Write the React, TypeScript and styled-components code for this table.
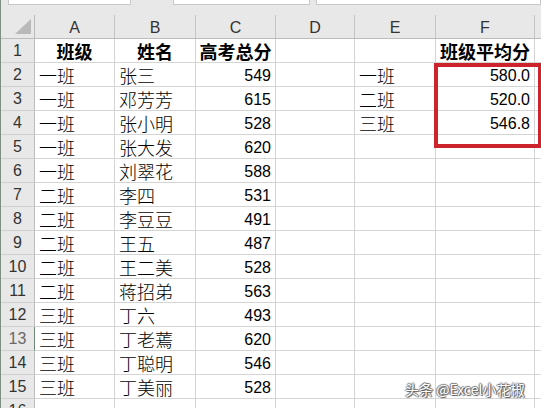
import React from "react";
import styled, { createGlobalStyle } from "styled-components";

const Global = createGlobalStyle`
  html, body { margin: 0; padding: 0; background: #ffffff; }
  body { width: 541px; height: 408px; overflow: hidden; }
  * { box-sizing: border-box; }
`;

const Page = styled.div`
  position: relative;
  width: 541px;
  height: 408px;
  overflow: hidden;
  background: #e8e8e8;
  border-left: 1px solid #7f8f83;
  font-family: "Liberation Sans", Arial, sans-serif;
`;

const FormulaStrip = styled.div`
  display: flex;
  height: 5px;
  padding-left: 7px;
  background: #e8e8e8;
`;

const FormulaBox = styled.div<{ $w: number; $gap: number }>`
  width: ${(p) => p.$w}px;
  margin-right: ${(p) => p.$gap}px;
  flex: ${(p) => (p.$w === 0 ? 1 : "none")};
  background: #ffffff;
  border: 1px solid #c8c8c8;
  border-top: none;
`;

const Gap = styled.div`
  height: 10px;
`;

const Grid = styled.div`
  display: grid;
  grid-template-columns: 34px 80px 81px 80px 79px 81px 99px 1fr;
  grid-auto-rows: 24px;
  background: #ffffff;
`;

const Corner = styled.div`
  background: #e8e8e8;
  border-right: 1px solid #bcbcbc;
  border-bottom: 1px solid #bcbcbc;
  display: flex;
  align-items: flex-end;
  justify-content: flex-end;
  padding: 0 3px 4px 0;
`;

const ColHead = styled.div`
  background: #e8e8e8;
  border-right: 1px solid #c4c4c4;
  border-bottom: 1px solid #bcbcbc;
  display: flex;
  align-items: center;
  justify-content: center;
  font-size: 16px;
  color: #333;
  padding-top: 2px;
`;

const RowHead = styled.div<{ $active?: boolean }>`
  background: #e8e8e8;
  border-right: 1px solid ${(p) => (p.$active ? "#6f8a76" : "#bcbcbc")};
  border-bottom: 1px solid #d0d0d0;
  display: flex;
  align-items: center;
  justify-content: center;
  font-size: 16px;
  color: ${(p) => (p.$active ? "#6a6a6a" : "#333")};
  padding-top: 1px;
`;

const Cell = styled.div<{ $align: "left" | "right" | "center"; $bold?: boolean; $cjk?: boolean }>`
  border-right: 1px solid #d4d4d4;
  border-bottom: 1px solid #d4d4d4;
  display: flex;
  align-items: center;
  justify-content: ${(p) => (p.$align === "left" ? "flex-start" : p.$align === "right" ? "flex-end" : "center")};
  padding: 0 4px;
  font-family: ${(p) => (p.$cjk ? '"Noto Sans CJK SC", sans-serif' : '"Liberation Sans", Arial, sans-serif')};
  font-size: ${(p) => (p.$cjk ? "18px" : "16px")};
  font-weight: ${(p) => (p.$bold ? 700 : p.$cjk ? 300 : 400)};
  color: #000;
  white-space: nowrap;
  overflow: hidden;
  line-height: 1;
  padding-top: ${(p) => (p.$cjk ? 0 : 2)}px;
`;

const Highlight = styled.div`
  position: absolute;
  left: 433px;
  top: 63px;
  width: 108px;
  height: 85px;
  border: 4px solid #cc232c;
  pointer-events: none;
`;

const Watermark = styled.div`
  position: absolute;
  left: 404px;
  top: 381px;
  font-family: "Noto Sans CJK SC", "Liberation Sans", sans-serif;
  font-size: 14px;
  line-height: 16px;
  color: #ffffff;
  text-shadow: 1px 1px 1px #555, -1px 0 1px #777, 0 -1px 1px #777, 1px 0 1px #777;
`;

type Val = string | number | undefined;

const header: Val[] = ["班级", "姓名", "高考总分", "", "", "班级平均分", ""];

const data: Val[][] = [
  ["一班", "张三", 549, "", "一班", "580.0"],
  ["一班", "邓芳芳", 615, "", "二班", "520.0"],
  ["一班", "张小明", 528, "", "三班", "546.8"],
  ["一班", "张大发", 620],
  ["一班", "刘翠花", 588],
  ["二班", "李四", 531],
  ["二班", "李豆豆", 491],
  ["二班", "王五", 487],
  ["二班", "王二美", 528],
  ["二班", "蒋招弟", 563],
  ["三班", "丁六", 493],
  ["三班", "丁老蔫", 620],
  ["三班", "丁聪明", 546],
  ["三班", "丁美丽", 528],
  [],
];

const cols = ["A", "B", "C", "D", "E", "F", ""];

const isNum = (v: Val) => typeof v === "number" || (typeof v === "string" && /^[0-9.]+$/.test(v));

export default function App() {
  return (
    <>
      <Global />
      <Page>
        <FormulaStrip>
          <FormulaBox $w={123} $gap={42} />
          <FormulaBox $w={137} $gap={6} />
          <FormulaBox $w={0} $gap={0} />
        </FormulaStrip>
        <Gap />
        <Grid>
          <Corner>
            <svg width="16" height="15" viewBox="0 0 16 15">
              <polygon points="16,0 16,15 0,15" fill="#b9b9b9" />
            </svg>
          </Corner>
          {cols.map((c, i) => (
            <ColHead key={i}>{c}</ColHead>
          ))}
          <RowHead>1</RowHead>
          {header.map((v, i) => (
            <Cell key={i} $align="center" $bold $cjk>
              {v}
            </Cell>
          ))}
          {data.map((row, r) => (
            <React.Fragment key={r}>
              <RowHead $active={r + 2 === 13}>{r + 2}</RowHead>
              {cols.map((_, c) => {
                const v = row[c];
                const num = v !== undefined && v !== "" && isNum(v);
                return (
                  <Cell key={c} $align={num ? "right" : "left"} $cjk={!num}>
                    {v}
                  </Cell>
                );
              })}
            </React.Fragment>
          ))}
        </Grid>
        <Highlight />
        <Watermark>头条 @Excel小花椒</Watermark>
      </Page>
    </>
  );
}
